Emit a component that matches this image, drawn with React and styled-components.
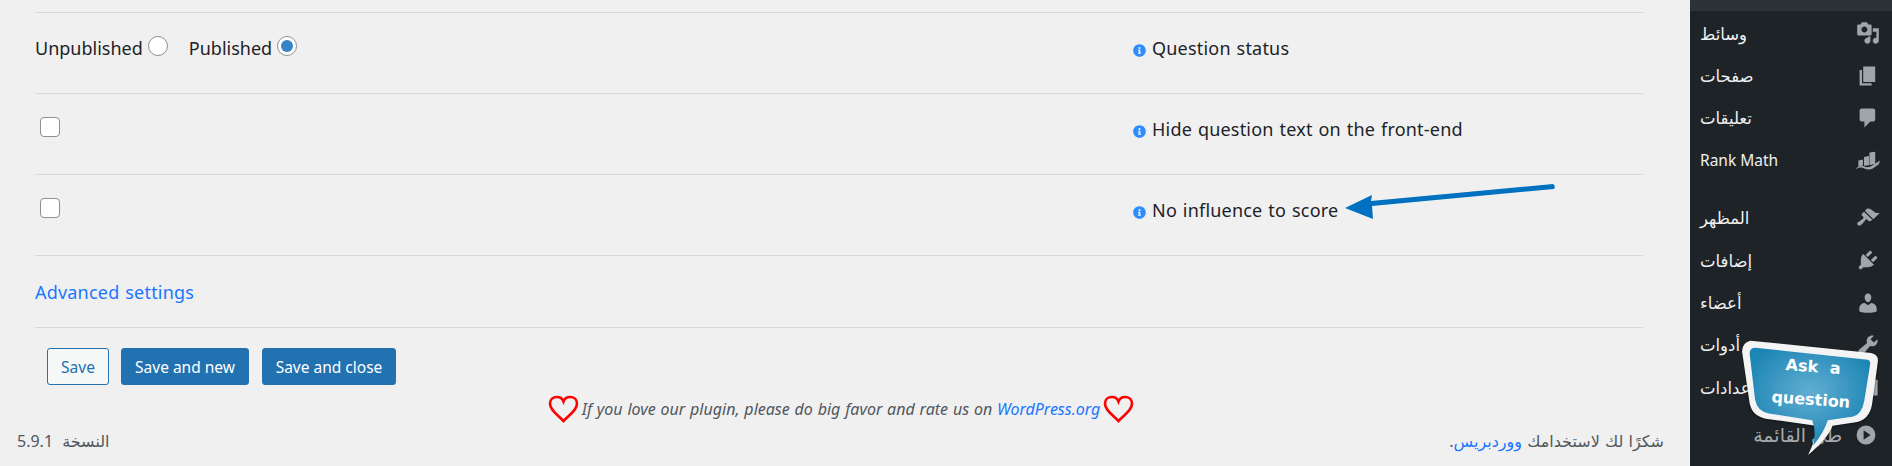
import styled, { createGlobalStyle } from 'styled-components'
import { FaInfoCircle } from 'react-icons/fa'

const GlobalStyle = createGlobalStyle`
    html, body {
        margin: 0;
        padding: 0;
        background: #f0f0f1;
    }
    body {
        font-family: "Noto Sans", "DejaVu Sans", sans-serif;
    }
`

const Page = styled.div`
    position: relative;
    display: flex;
    width: 1892px;
    height: 466px;
    overflow: hidden;
    background: #f0f0f1;
`

const Main = styled.main`
    display: flex;
    flex-direction: column;
    flex: 1;
    padding: 12px 47px 0 35px;
    min-width: 0;
`

const Row = styled.div`
    display: grid;
    grid-template-columns: 1098px 1fr;
    height: 58px;
    padding-top: 22px;
    border-top: 1px solid #d8d8d8;
    font-size: 18px;
    line-height: 26px;
    color: #1d2327;
`

const Choices = styled.div`
    display: flex;
    align-items: flex-start;
`

const Choice = styled.label`
    display: flex;
    align-items: flex-start;
    margin-right: 21px;
    gap: 5px;
`

const Radio = styled.span`
    display: flex;
    align-items: center;
    justify-content: center;
    width: 20px;
    height: 20px;
    margin-top: 1px;
    box-sizing: border-box;
    border: 1px solid #8c8f94;
    border-radius: 50%;
    background: #fff;
    &::before {
        content: '';
        display: ${p => (p.$on ? 'block' : 'none')};
        width: 12px;
        height: 12px;
        border-radius: 50%;
        background: #3582c4;
    }
`

const Checkbox = styled.span`
    display: block;
    width: 20px;
    height: 20px;
    margin: 1px 0 0 5px;
    box-sizing: border-box;
    border: 1px solid #8c8f94;
    border-radius: 4px;
    background: #fff;
`

const Label = styled.div`
    display: flex;
    align-items: flex-start;
    gap: 6px;
    letter-spacing: .2px;
    word-spacing: 1px;
    svg {
        width: 13px;
        height: 13px;
        margin-top: 9px;
        color: #2f8cff;
        flex: none;
    }
`

const AdvancedRow = styled.div`
    height: 71px;
    border-top: 1px solid #d8d8d8;
    border-bottom: 1px solid #d8d8d8;
    font-size: 18px;
    line-height: 73px;
    letter-spacing: .2px;
    word-spacing: 1px;
`

const BlueLink = styled.a`
    color: #1a76ff;
    text-decoration: none;
`

const Buttons = styled.div`
    display: flex;
    padding: 20px 0 0 12px;
`

const Button = styled.button`
    height: 37px;
    width: ${p => p.$w}px;
    margin-right: ${p => p.$gap}px;
    padding: 0;
    border: 1px solid #2271b1;
    border-radius: 3px;
    background: ${p => (p.$primary ? '#2271b1' : '#f6f7f7')};
    color: ${p => (p.$primary ? '#fff' : '#2271b1')};
    font-family: inherit;
    font-size: 15.5px;
`

const RateLine = styled.div`
    display: flex;
    align-items: center;
    justify-content: center;
    gap: 3px;
    height: 28px;
    margin: 10px 0 0 4px;
    font-size: 16px;
    font-style: italic;
    word-spacing: .7px;
    color: #50575e;
`

const Footer = styled.footer`
    display: flex;
    justify-content: space-between;
    margin: 7px -21px 0 -18px;
    font-size: 16px;
    line-height: 22px;
    word-spacing: 1px;
    color: #50575e;
`

const Version = styled.span`
    word-spacing: 5px;
`

const Sidebar = styled.aside`
    display: flex;
    flex-direction: column;
    flex: none;
    width: 202px;
    background: #1d2327;
    &::before {
        content: '';
        display: block;
        height: 11px;
        background: #2c3338;
    }
`

const MenuList = styled.nav`
    display: flex;
    flex-direction: column;
    padding-top: 1px;
`

const MenuItem = styled.div`
    display: flex;
    align-items: center;
    justify-content: space-between;
    height: 42.4px;
    margin-top: ${p => (p.$sep ? '15px' : '0')};
    padding: 0 12px 0 10px;
    font-size: ${p => (p.$latin ? '15.5px' : '16.5px')};
    color: #f0f0f1;
    svg {
        width: 24px;
        height: 24px;
        fill: #a0a5aa;
        flex: none;
    }
`

const Collapse = styled.div`
    display: flex;
    align-items: center;
    justify-content: flex-end;
    gap: 12px;
    height: 40px;
    margin-top: 6px;
    padding-right: 14px;
    font-size: 19px;
    color: #a7aaad;
    svg {
        width: 24px;
        height: 24px;
        fill: #a0a5aa;
        flex: none;
    }
`

const Arrow = styled.svg`
    position: absolute;
    left: 1340px;
    top: 180px;
`

const Bubble = styled.div`
    position: absolute;
    left: 1740px;
    top: 340px;
    width: 143px;
    height: 119px;
    svg {
        display: block;
        filter: drop-shadow(0 1px 1px rgba(0, 0, 0, .4));
    }
`

const BubbleText = styled.div`
    position: absolute;
    left: 16px;
    top: 10px;
    width: 112px;
    transform: rotate(4deg);
    text-align: center;
    font-family: "Comic Sans MS", "DejaVu Sans", sans-serif;
    font-weight: 700;
    font-size: 16px;
    line-height: 33px;
    word-spacing: 6px;
    color: #fff;
`

function Icon({ d }) {
    return (
        <svg viewBox="0 0 20 20" overflow="visible">
            <path d={d} fillRule="evenodd" />
        </svg>
    )
}

const Heart = () => (
    <svg width="31" height="28" viewBox="0 0 31 28">
        <path
            d="M15.5 26 C10 20 2 15.5 2 8.5 C2 4.5 5 2 9 2 C12 2 14.5 3.8 15.5 6.5 C16.5 3.8 19 2 22 2 C26 2 29 4.5 29 8.5 C29 15.5 21 20 15.5 26 Z"
            fill="none"
            stroke="#f00"
            strokeWidth="2.6"
        />
    </svg>
)

const icons = {
    media: 'M13 11V4c0-.55-.45-1-1-1h-1.67L9 1H5L3.67 3H2c-.55 0-1 .45-1 1v7c0 .55.45 1 1 1h10c.55 0 1-.45 1-1zM7 4.5c1.38 0 2.5 1.12 2.5 2.5S8.38 9.5 7 9.5 4.5 8.38 4.5 7 5.62 4.5 7 4.5zM14 6h5v10.5c0 1.38-1.12 2.5-2.5 2.5S14 17.88 14 16.5s1.12-2.5 2.5-2.5c.17 0 .34.02.5.05V9h-3V6zm-4 8.05V13h2v3.5c0 1.38-1.12 2.5-2.5 2.5S7 17.88 7 16.5 8.12 14 9.5 14c.17 0 .34.02.5.05z',
    pages: 'M6 15V2h10v13H6zm-1 1h8v2H3V5h2v11z',
    comments: 'M5 2h9q.82 0 1.41.59T16 4v7q0 .82-.59 1.41T14 13h-2l-5 5v-5H5q-.82 0-1.41-.59T3 11V4q0-.82.59-1.41T5 2z',
    rank: 'M2 10.5l3.8-1v5l-3.8 1zM6.7 7.5l4.1-.8v7.6l-4.1.4zM11.2 3.8l4.8-.6v10l-4.8 1.2zM0 17c3-2.5 5-2.5 7-1.5s4 .5 6-.5l7-4.5-1 3-5 3.5c-3 1.5-5 1-7 0s-4-1-7 .5z',
    appearance: 'M14.48 11.06L7.41 3.99l1.5-1.5c.5-.56 2.3-.47 3.51.32 1.21.8 1.43 1.28 2.91 2.1 1.18.64 2.45 1.26 4.45.85zm-.71.71L6.7 4.7 4.93 6.47c-.39.39-.39 1.02 0 1.41l1.06 1.06c.39.39.39 1.03 0 1.42-.6.6-1.43 1.11-2.21 1.69-.35.26-.7.53-1.01.84C1.43 13.23.4 14.75 1.53 15.88c1.13 1.13 2.64.11 3.97-1.25.31-.31.58-.66.84-1.01.58-.78 1.09-1.61 1.69-2.21.39-.39 1.02-.39 1.41 0l1.06 1.06c.39.39 1.02.39 1.41 0z',
    plugins: 'M13.11 4.36L9.87 7.6 8 5.73l3.24-3.24c.35-.34 1.05-.2 1.56.32.52.51.66 1.21.31 1.55zm-8 1.77l.91-1.12 9.01 9.01-1.19.84c-.71.71-2.63 1.16-3.82 1.16H6.14L4.9 17.26c-.59.59-1.54.59-2.12 0-.59-.58-.59-1.53 0-2.12l1.24-1.24v-3.88c0-1.13.4-3.19 1.09-3.89zm7.26 3.97l3.24-3.24c.34-.35 1.04-.21 1.55.31.52.51.66 1.21.31 1.55l-3.24 3.25z',
    users: 'M10 9.25c-2.27 0-2.73-3.44-2.73-3.44C7 4.02 7.82 2 9.97 2c2.16 0 2.98 2.02 2.71 3.81 0 0-.41 3.44-2.68 3.44zm0 2.57L12.72 10c2.39 0 4.52 2.33 4.52 4.53v2.49s-3.65 1.13-7.24 1.13c-3.65 0-7.24-1.13-7.24-1.13v-2.49c0-2.25 1.94-4.48 4.47-4.48z',
    tools: 'M16.68 9.77c-1.34 1.34-3.3 1.67-4.95.99l-5.41 6.52c-.99.99-2.59.99-3.58 0s-.99-2.59 0-3.57l6.52-5.42c-.68-1.65-.35-3.61.99-4.95 1.28-1.28 3.12-1.62 4.72-1.06l-2.89 2.89 2.82 2.82 2.86-2.87c.53 1.58.18 3.39-1.08 4.65z',
    settings: 'M2 4h16v13H2zM13 6v5h2V6z',
    collapse: 'M10 2.16a7.84 7.84 0 1 1 0 15.68 7.84 7.84 0 0 1 0-15.68zM8 6.12v7.76L13.82 10z',
}

const menu = [
    { label: 'وسائط', icon: 'media' },
    { label: 'صفحات', icon: 'pages' },
    { label: 'تعليقات', icon: 'comments' },
    { label: 'Rank Math', icon: 'rank', latin: true },
    { label: 'المظهر', icon: 'appearance', sep: true },
    { label: 'إضافات', icon: 'plugins' },
    { label: 'أعضاء', icon: 'users' },
    { label: 'أدوات', icon: 'tools' },
    { label: 'إعدادات', icon: 'settings' },
]

function App() {
    return (
        <Page>
            <GlobalStyle />
            <Main>
                <Row>
                    <Choices>
                        <Choice>Unpublished <Radio /></Choice>
                        <Choice>Published <Radio $on /></Choice>
                    </Choices>
                    <Label><FaInfoCircle />Question status</Label>
                </Row>
                <Row>
                    <Checkbox />
                    <Label><FaInfoCircle />Hide question text on the front-end</Label>
                </Row>
                <Row>
                    <Checkbox />
                    <Label><FaInfoCircle />No influence to score</Label>
                </Row>
                <AdvancedRow>
                    <BlueLink href="#">Advanced settings</BlueLink>
                </AdvancedRow>
                <Buttons>
                    <Button $w={62} $gap={12}>Save</Button>
                    <Button $primary $w={128} $gap={13}>Save and new</Button>
                    <Button $primary $w={134}>Save and close</Button>
                </Buttons>
                <RateLine>
                    <Heart />
                    <span>If you love our plugin, please do big favor and rate us on <BlueLink href="#">WordPress.org</BlueLink></span>
                    <Heart />
                </RateLine>
                <Footer>
                    <Version>النسخة 5.9.1</Version>
                    <span dir="rtl">شكرًا لك لاستخدامك <BlueLink href="#">ووردبريس</BlueLink>.</span>
                </Footer>
            </Main>
            <Sidebar>
                <MenuList>
                    {menu.map(item => (
                        <MenuItem key={item.icon} $sep={item.sep} $latin={item.latin}>
                            <span>{item.label}</span>
                            <Icon d={icons[item.icon]} />
                        </MenuItem>
                    ))}
                </MenuList>
                <Collapse>
                    <span>طي القائمة</span>
                    <Icon d={icons.collapse} />
                </Collapse>
            </Sidebar>
            <Arrow width="220" height="40" viewBox="0 0 220 40">
                <path d="M5 28 L32 15 L31 21 L213 4 Q216 6 214 9 L32 26 L33 39 Z" fill="#0070c0" />
            </Arrow>
            <Bubble>
                <svg width="143" height="119" viewBox="0 0 420 350">
                    <defs>
                        <radialGradient id="bubbleFill" cx="50%" cy="45%" r="55%">
                            <stop offset="0%" stopColor="#62aed2" />
                            <stop offset="100%" stopColor="#1e86b5" />
                        </radialGradient>
                    </defs>
                    <path d="M30 2 L385 38 Q408 42 405 65 L388 190 Q380 235 340 242 L272 252 Q258 290 200 338 Q225 290 223 252 L80 232 Q35 225 28 185 L6 35 Q5 8 30 2 Z" fill="#f4f4f4" />
                    <path d="M45 23 L375 58 Q385 60 382 75 L365 180 Q358 220 330 226 L258 236 Q245 275 215 310 Q225 270 212 236 L85 216 Q50 210 44 175 L28 40 Q28 23 45 23 Z" fill="url(#bubbleFill)" />
                </svg>
                <BubbleText>Ask a<br />question</BubbleText>
            </Bubble>
        </Page>
    )
}

export default App
